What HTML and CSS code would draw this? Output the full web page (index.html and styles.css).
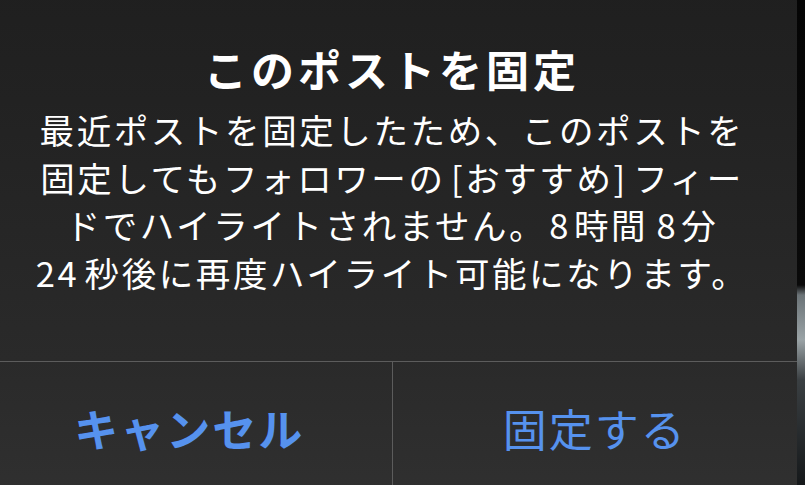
FILE: index.html
```html
<!DOCTYPE html>
<html lang="ja">
<head>
<meta charset="utf-8">
<link rel="stylesheet" href="styles.css">
</head>
<body>
<div class="screen">
  <div class="alert">
    <div class="content">
      <h1 class="title">このポストを固定</h1>
      <p class="message">最近ポストを固定したため、このポストを<br>固定してもフォロワーの [おすすめ] フィー<br>ドでハイライトされません。<span class="digit">8</span>時間 <span class="digit">8</span>分<br>24 秒後に再度ハイライト可能になります。</p>
    </div>
    <div class="actions">
      <div class="action action-cancel">キャンセル</div>
      <div class="action action-pin">固定する</div>
    </div>
  </div>
  <div class="backdrop"></div>
</div>
</body>
</html>
```

FILE: styles.css
```css
html, body {
  margin: 0;
  padding: 0;
  width: 805px;
  height: 485px;
  overflow: hidden;
  background: #000;
}
.screen {
  display: flex;
  width: 805px;
  height: 485px;
  overflow: hidden;
  font-family: "Noto Sans CJK JP", "Noto Sans", sans-serif;
}
.alert {
  flex: 0 0 810px;
  display: flex;
  flex-direction: column;
  height: 530px;
  margin-top: -20px;
  margin-left: -13px;
  border-radius: 22px;
  background: linear-gradient(to bottom, #1f1f1f 0px, #222222 120px, #2a2a2a 380px, #303030 520px);
  color: #fff;
}
.content {
  height: 382px;
  box-sizing: border-box;
  padding-top: 59px;
  border-bottom: 1px solid #5c5c5c;
  text-align: center;
}
.title {
  margin: 0;
  font-size: 43px;
  line-height: 58px;
  font-weight: 700;
  letter-spacing: 4px;
}
.message {
  margin: 9px 0 0 0;
  font-size: 34.5px;
  line-height: 47.5px;
  font-weight: 400;
  letter-spacing: 2.6px;
  word-spacing: -5px;
}
.digit {
  padding: 0 3px;
}
.actions {
  flex: 1;
  display: flex;
}
.action {
  flex: 1;
  display: flex;
  justify-content: center;
  padding-top: 36px;
  font-size: 44px;
  line-height: 60px;
  color: #5692ee;
  letter-spacing: 2px;
}
.action-cancel {
  font-weight: 700;
  border-right: 1px solid #5c5c5c;
}
.action-pin {
  font-weight: 400;
}
.backdrop {
  flex: 1;
  background: linear-gradient(to bottom, #050505 0px, #0a0a0a 285px, #6b7377 295px, #9aa3a6 340px, #3a3f42 380px, #15181a 485px);
}
```
